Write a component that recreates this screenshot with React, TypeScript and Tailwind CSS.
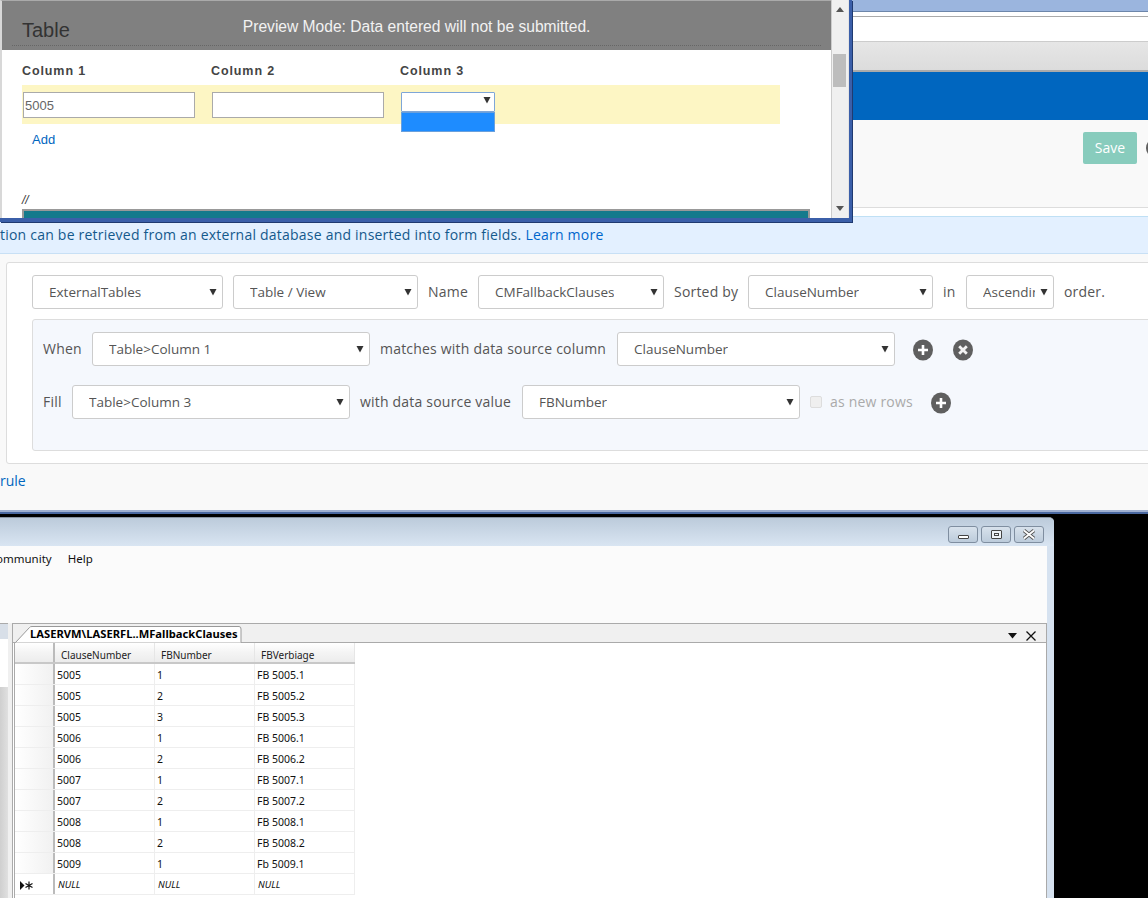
import React from "react";

const Arrow = ({ className = "" }: { className?: string }) => (
  <svg width="8" height="8" viewBox="0 0 8 8" className={"shrink-0 " + className}>
    <polygon points="0.5,1 7.5,1 4,7.5" fill="#333" />
  </svg>
);

const Sel = ({ w, text, clip }: { w: string; text: string; clip?: string }) => (
  <div className={"flex h-[34px] shrink-0 items-center justify-between rounded-[3px] border border-[#ccc] bg-white pl-4 pr-[5px] text-[13.5px] text-[#555] " + w}>
    <span className={"overflow-hidden whitespace-nowrap " + (clip ?? "")}>{text}</span>
    <Arrow />
  </div>
);

const Lbl = ({ w, text, className = "" }: { w: string; text: string; className?: string }) => (
  <span className={"-mt-[1px] shrink-0 whitespace-nowrap tracking-[0.2px] " + w + " " + className}>{text}</span>
);

const Circle = ({ kind, className = "" }: { kind: "plus" | "x"; className?: string }) => (
  <svg width="20" height="22" viewBox="0 0 20 22" className={"mt-[1px] shrink-0 " + className}>
    <ellipse cx="10" cy="11" rx="10" ry="10.5" fill="#5f5f5f" />
    {kind === "plus" ? (
      <path d="M10 6v10M5 11h10" stroke="#fff" strokeWidth="2.6" />
    ) : (
      <path d="M6.2 7.2l7.6 7.6M13.8 7.2l-7.6 7.6" stroke="#f2f2f2" strokeWidth="2.8" />
    )}
  </svg>
);

const WinBtn = ({ children }: { children: React.ReactNode }) => (
  <div className="flex h-[17px] w-[30px] items-center justify-center rounded-[3px] border border-[#7f8ea0] bg-gradient-to-b from-[#d8e2ec] to-[#bccbdb]">
    {children}
  </div>
);

const rows = [
  ["5005", "1", "FB 5005.1"],
  ["5005", "2", "FB 5005.2"],
  ["5005", "3", "FB 5005.3"],
  ["5006", "1", "FB 5006.1"],
  ["5006", "2", "FB 5006.2"],
  ["5007", "1", "FB 5007.1"],
  ["5007", "2", "FB 5007.2"],
  ["5008", "1", "FB 5008.1"],
  ["5008", "2", "FB 5008.2"],
  ["5009", "1", "Fb 5009.1"],
];

function PreviewWindow() {
  return (
    <div className="absolute left-0 top-0 flex h-[222px] w-[852px] border-b-[4px] border-r-[3px] border-b-[#3b5fa9] border-r-[#3b5fa9] bg-white font-['Liberation_Sans',sans-serif] shadow-[1px_1px_0_#1f3a70]">
      <div className="flex min-w-0 flex-1 flex-col overflow-hidden border-l-2 border-t border-l-[#d8d8d8] border-t-[#aaa]">
        <div className="h-[49px] shrink-0 bg-[#808080] pl-[10px] pr-[10px]">
          <div className="flex h-[45px] items-start border-b border-dotted border-[#666]">
            <span className="ml-[10px] mt-[17px] text-[20px] leading-6 text-[#333]">Table</span>
            <span className="ml-[173px] mt-[16px] text-[15.6px] leading-5 text-[#f2f2f2]">Preview Mode: Data entered will not be submitted.</span>
          </div>
        </div>
        <div className="flex pl-5 pt-[13px]">
          {["Column 1", "Column 2", "Column 3"].map((c) => (
            <span key={c} className="w-[189px] text-[12.5px] font-bold leading-4 tracking-[0.9px] text-[#444]">{c}</span>
          ))}
        </div>
        <div className="ml-5 mt-[6px] flex h-[39px] w-[758px] shrink-0 gap-[17px] bg-[#fdf6c4] pl-[1px] pt-[7px]">
          <div className="flex h-[26px] w-[172px] items-center border border-[#aaa] bg-white pl-[1px] pt-[2px] text-[13px] text-[#666]">5005</div>
          <div className="h-[26px] w-[172px] border border-[#aaa] bg-white" />
          <div className="relative h-[20px] w-[94px] rounded-[1px] border border-[#7ea6d8] bg-white">
            <Arrow className="absolute right-[3px] top-[3px]" />
            <div className="absolute -left-[1px] top-[19px] h-[20px] w-[94px] border border-[#6aa0dc] bg-[#1e8cff]" />
          </div>
        </div>
        <span className="ml-[30px] mt-[8px] text-[13px] leading-4 text-[#0066bf]">Add</span>
        <span className="ml-5 mt-[44px] text-[12px] italic leading-4 text-[#333]">//</span>
        <div className="ml-5 mt-[1px] h-[9px] w-[788px] shrink-0 border-l-2 border-r-2 border-t-2 border-[#999] bg-[#147a8c]" />
      </div>
      <div className="flex w-[18px] shrink-0 flex-col border-l border-r border-l-[#ccc] border-r-[#e4e4e4] bg-[#f0f0f0]">
        <div className="flex h-[19px] shrink-0 items-center justify-center">
          <svg width="8" height="5" viewBox="0 0 8 5"><polygon points="4,0 8,5 0,5" fill="#555" /></svg>
        </div>
        <div className="ml-[1px] mt-[35px] h-[33px] w-[13px] bg-[#bdbdbd]" />
        <div className="mt-auto flex h-[19px] shrink-0 items-center justify-center">
          <svg width="8" height="5" viewBox="0 0 8 5"><polygon points="0,0 8,0 4,5" fill="#555" /></svg>
        </div>
      </div>
    </div>
  );
}

function BackWindow() {
  return (
    <div className="flex h-[514px] w-[1148px] shrink-0 flex-col overflow-hidden bg-[#f9f9f9] font-['Open_Sans',sans-serif]">
      <div className="h-[11px] shrink-0 bg-[#9bb5de]" />
      <div className="h-[1px] shrink-0 bg-[#6d86aa]" />
      <div className="h-[4px] shrink-0 bg-white" />
      <div className="h-[26px] shrink-0 border-b border-t border-b-[#ccc] border-t-[#aaa] bg-white" />
      <div className="h-[30px] shrink-0 border-b-2 border-b-[#aaa] bg-gradient-to-b from-[#e6e6e6] to-[#dcdcdc]" />
      <div className="h-[48px] shrink-0 bg-[#0066bf]" />
      <div className="flex h-[87px] shrink-0 pl-[1083px] pt-[12px]">
        <div className="flex h-[32px] w-[54px] shrink-0 items-center justify-center rounded-[2px] bg-[#88ccbd] pb-[1px] text-[14px] text-white">Save</div>
        <div className="ml-[9px] mt-[6px] h-[20px] w-[20px] shrink-0 rounded-full bg-[#5f5f5f]" />
      </div>
      <div className="h-[1px] shrink-0 bg-[#ddd]" />
      <div className="h-[8px] shrink-0 bg-white" />
      <div className="flex h-[38px] shrink-0 items-center whitespace-nowrap border-b border-t border-b-[#c8e0f5] border-t-[#bfe0f5] bg-[#e3f0ff] pb-[2px] text-[14px] tracking-[0.22px] text-[#14598c]">
        <span>tion can be retrieved from an external database and inserted into form fields.</span>
        <span className="ml-[4px] text-[#0066cc]">Learn more</span>
      </div>
      <div className="ml-[6px] mt-[8px] h-[202px] w-[1200px] shrink-0 rounded-[3px] border border-[#ddd] bg-white pl-[25px] pt-[12px] text-[14px] text-[#555]">
        <div className="flex h-[34px] items-center gap-[10px]">
          <Sel w="w-[191px]" text="ExternalTables" />
          <Sel w="w-[185px]" text="Table / View" />
          <Lbl w="w-[40px]" text="Name" />
          <Sel w="w-[186px]" text="CMFallbackClauses" />
          <Lbl w="w-[64px]" text="Sorted by" />
          <Sel w="w-[185px]" text="ClauseNumber" />
          <Lbl w="w-[13px]" text="in" />
          <Sel w="w-[88px]" text="Ascending" clip="w-[52px]" />
          <Lbl w="w-[41px]" text="order." />
        </div>
        <div className="mt-[10px] h-[132px] w-[1175px] rounded-[3px] border border-[#ddd] bg-[#f5f8fd] pl-[10px] pt-[12px]">
          <div className="flex h-[34px] items-center gap-[10px]">
            <Lbl w="w-[39px]" text="When" />
            <Sel w="w-[278px]" text="Table>Column 1" />
            <Lbl w="w-[227px]" text="matches with data source column" />
            <Sel w="w-[278px]" text="ClauseNumber" />
            <Circle kind="plus" className="ml-[8px]" />
            <Circle kind="x" className="ml-[10px]" />
          </div>
          <div className="mt-[19px] flex h-[34px] items-center gap-[10px]">
            <Lbl w="w-[19px]" text="Fill" />
            <Sel w="w-[278px]" text="Table>Column 3" />
            <Lbl w="w-[152px]" text="with data source value" />
            <Sel w="w-[278px]" text="FBNumber" />
            <div className="h-[12px] w-[12px] shrink-0 rounded-[2px] border border-[#ddd] bg-[#efefef]" />
            <Lbl w="w-[83px]" text="as new rows" className="-ml-[2px] text-[#aaa]" />
            <Circle kind="plus" className="ml-[8px]" />
          </div>
        </div>
      </div>
      <span className="mt-[7px] text-[14px] leading-5 text-[#0066bf]">rule</span>
      <div className="mt-auto h-[2px] shrink-0 bg-[#a0b0d0]" />
      <div className="h-[2px] shrink-0 bg-[#4a68a0]" />
    </div>
  );
}

function SqlWindow() {
  return (
    <div className="mt-[3px] flex min-h-0 w-[1054px] flex-1 flex-col overflow-hidden rounded-tr-[5px] border-t border-[#8a95a3] bg-[#d6e2f0] font-['Noto_Sans',sans-serif] text-[#111]">
      <div className="flex h-[28px] shrink-0 justify-end gap-[3px] bg-gradient-to-b from-[#bccbdb] to-[#d9e5f2] pr-[10px] pt-[8px]">
        <WinBtn>
          <div className="mt-[5px] h-[4px] w-[11px] rounded-[1px] border border-[#444] bg-white" />
        </WinBtn>
        <WinBtn>
          <div className="h-[9px] w-[11px] rounded-[1px] border border-[#444] bg-[#eef2f6] p-[2px]"><div className="h-[3px] w-[5px] border border-[#444]" /></div>
        </WinBtn>
        <WinBtn>
          <svg width="14" height="11" viewBox="0 0 14 11">
            <path d="M2 1.5l10 8M12 1.5l-10 8" stroke="#555" strokeWidth="3.6" />
            <path d="M2 1.5l10 8M12 1.5l-10 8" stroke="#fff" strokeWidth="1.8" />
          </svg>
        </WinBtn>
      </div>
      <div className="mr-[7px] flex min-h-0 flex-1 flex-col bg-[#fbfbfb]">
        <div className="-ml-[4px] flex h-[77px] shrink-0 gap-4 whitespace-nowrap pt-[4px] text-[11.5px] leading-[18px]">
          <span>ommunity</span>
          <span>Help</span>
        </div>
        <div className="flex min-h-0 flex-1">
          <div className="flex w-[8px] shrink-0 flex-col border-t border-[#aaa]">
            <div className="h-[15px] shrink-0 bg-[#d8dfe8]" />
            <div className="h-[48px] shrink-0 bg-white" />
            <div className="flex-1 bg-gradient-to-r from-[#cfcfcf] to-[#e0e0e0]" />
          </div>
          <div className="w-[4px] shrink-0 bg-[#f0f0f0]" />
          <div className="flex min-w-0 flex-1 flex-col border-l border-r border-t border-[#aaa] bg-white">
            <div className="relative flex h-[19px] shrink-0 items-end border-b border-[#aaa] bg-[#f0f0f0] pr-[10px]">
              <div className="relative ml-[2px] flex h-[16px] w-[227px] shrink-0 items-center pl-[15px]">
                <svg width="227" height="17" viewBox="0 0 227 17" className="absolute left-0 top-0">
                  <path d="M0.5 16.5L14.5 1.5Q15 0.5 17 0.5H224Q226 0.5 226 3V16.5" fill="#fff" stroke="#999" />
                </svg>
                <span className="relative whitespace-nowrap text-[11.2px] font-bold leading-4 text-black">LASERVM\LASERFL..MFallbackClauses</span>
              </div>
              <svg width="10" height="6" viewBox="0 0 10 6" className="mb-[3px] ml-auto shrink-0"><polygon points="0,0 9,0 4.5,5.5" fill="#111" /></svg>
              <svg width="10" height="10" viewBox="0 0 10 10" className="mb-[1px] ml-[8px] shrink-0"><path d="M0.5 0.5l9 9M9.5 0.5l-9 9" stroke="#111" strokeWidth="1.3" /></svg>
            </div>
            <div className="flex min-h-0 flex-1 pl-[1px]">
              <div className="w-[1px] shrink-0 bg-[#aaa]" />
              <div className="w-[340px] shrink-0 text-[10.5px]">
                <div className="flex h-[21px] border-b-2 border-[#c8c8c8] bg-gradient-to-b from-white via-[#f4f4f4] to-[#ececec] text-[10px] text-[#222]">
                  <div className="w-[40px] shrink-0 border-r-2 border-[#bbb]" />
                  {["ClauseNumber", "FBNumber", "FBVerbiage"].map((h) => (
                    <div key={h} className="flex w-[100px] shrink-0 items-center border-r border-[#e6e6e6] pl-[6px] pt-[5px]">{h}</div>
                  ))}
                </div>
                {rows.map((r, i) => (
                  <div key={i} className="flex h-[21px] border-b border-[#eeeeee]">
                    <div className="w-[40px] shrink-0 border-r-2 border-[#bbb] bg-gradient-to-r from-white to-[#f1f1f1]" />
                    {r.map((c, j) => (
                      <div key={j} className="flex w-[100px] shrink-0 items-center border-r border-[#eeeeee] pl-[2px] pt-[4px]">{c}</div>
                    ))}
                  </div>
                ))}
                <div className="flex h-[21px] border-b border-[#eeeeee]">
                  <div className="flex w-[40px] shrink-0 items-center border-r-2 border-[#bbb] bg-white pl-[5px] pt-[2px]">
                    <svg width="13" height="9" viewBox="0 0 13 9">
                      <polygon points="0,0 4.5,4.5 0,9" fill="#111" />
                      <path d="M9 0.5v8M5.5 2.5l7 4M12.5 2.5l-7 4" stroke="#111" strokeWidth="1.2" />
                    </svg>
                  </div>
                  {["NULL", "NULL", "NULL"].map((c, j) => (
                    <div key={j} className="flex w-[100px] shrink-0 items-center border-r border-[#eeeeee] pl-[3px] pt-[2px] text-[9.5px] italic">{c}</div>
                  ))}
                </div>
              </div>
            </div>
          </div>
        </div>
      </div>
    </div>
  );
}

export default function App() {
  return (
    <div className="relative flex h-[898px] w-[1148px] flex-col overflow-hidden bg-black">
      <BackWindow />
      <SqlWindow />
      <PreviewWindow />
    </div>
  );
}
